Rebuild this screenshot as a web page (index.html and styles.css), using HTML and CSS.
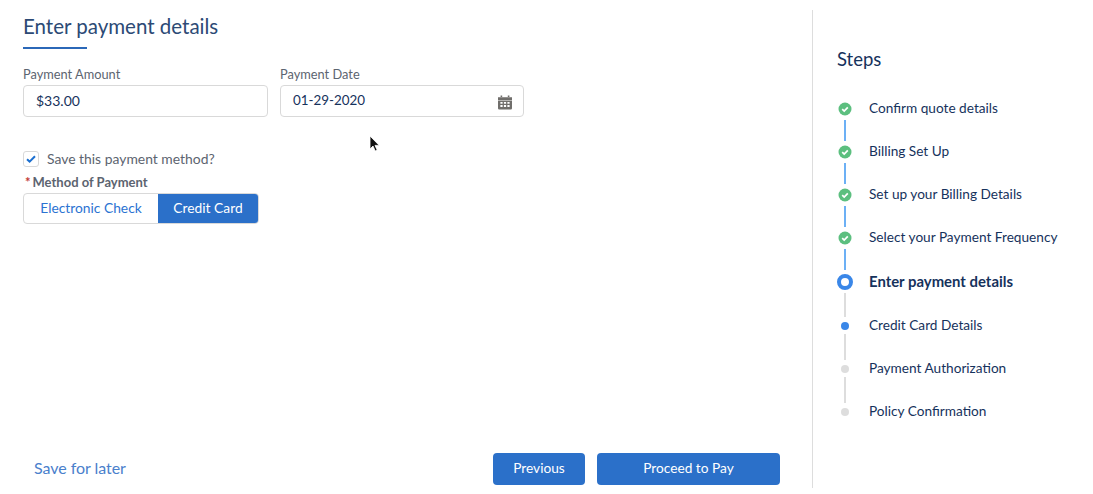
FILE: index.html
```html
<!DOCTYPE html>
<html lang="en-US">
<head>
<meta charset="utf-8">
<title>Enter payment details</title>
<link rel="stylesheet" href="styles.css">
</head>
<body>
<div class="page">
  <main class="main">
    <h1 class="title">Enter payment details</h1>
    <div class="title-rule"></div>

    <div class="fields">
      <div class="field">
        <label class="field-label">Payment Amount</label>
        <div class="input">$33.00</div>
      </div>
      <div class="field">
        <label class="field-label">Payment Date</label>
        <div class="input date">
          01-29-2020
          <svg class="cal" viewBox="0 0 14 14" width="14" height="15">
            <path fill="#706e6b" d="M2.6 0h1.6v1.6H2.6zM9.8 0h1.6v1.6H9.8zM0 1.8h14v2.6H0zM0 5h14v7.8a1.2 1.2 0 0 1-1.2 1.2H1.2A1.2 1.2 0 0 1 0 12.8z"/>
            <path fill="#fff" d="M2.4 6.4h2.2v1.8H2.4zM5.9 6.4h2.2v1.8H5.9zM9.4 6.4h2.2v1.8H9.4zM2.4 9.6h2.2v1.8H2.4zM5.9 9.6h2.2v1.8H5.9zM9.4 9.6h2.2v1.8H9.4z"/>
          </svg>
        </div>
      </div>
    </div>

    <div class="save-row">
      <span class="checkbox">
        <svg viewBox="0 0 10 8" width="10" height="8"><path d="M1 4.2l2.6 2.4L9 1.2" fill="none" stroke="#1b6fd0" stroke-width="2"/></svg>
      </span>
      <span class="save-text">Save this payment method?</span>
    </div>

    <div class="method-label"><span class="req">*</span>Method of Payment</div>
    <div class="toggle">
      <span class="toggle-item">Electronic Check</span>
      <span class="toggle-item on">Credit Card</span>
    </div>

    <div class="footer">
      <a class="later">Save for later</a>
      <div class="actions">
        <button class="btn prev">Previous</button>
        <button class="btn pay">Proceed to Pay</button>
      </div>
    </div>
  </main>

  <aside class="side">
    <h2 class="side-title">Steps</h2>
    <ul class="steps">
      <li class="step done"><span class="mark"><svg viewBox="0 0 14 14" width="14" height="14"><circle cx="7" cy="7" r="6.5" fill="#5cbf7f"/><path d="M4.2 7.2l2 1.9 3.6-3.8" fill="none" stroke="#fff" stroke-width="1.7"/></svg></span>Confirm quote details</li>
      <li class="step done"><span class="mark"><svg viewBox="0 0 14 14" width="14" height="14"><circle cx="7" cy="7" r="6.5" fill="#5cbf7f"/><path d="M4.2 7.2l2 1.9 3.6-3.8" fill="none" stroke="#fff" stroke-width="1.7"/></svg></span>Billing Set Up</li>
      <li class="step done"><span class="mark"><svg viewBox="0 0 14 14" width="14" height="14"><circle cx="7" cy="7" r="6.5" fill="#5cbf7f"/><path d="M4.2 7.2l2 1.9 3.6-3.8" fill="none" stroke="#fff" stroke-width="1.7"/></svg></span>Set up your Billing Details</li>
      <li class="step done last-done"><span class="mark"><svg viewBox="0 0 14 14" width="14" height="14"><circle cx="7" cy="7" r="6.5" fill="#5cbf7f"/><path d="M4.2 7.2l2 1.9 3.6-3.8" fill="none" stroke="#fff" stroke-width="1.7"/></svg></span>Select your Payment Frequency</li>
      <li class="step current"><span class="mark"><span class="ring"></span></span>Enter payment details</li>
      <li class="step next"><span class="mark"><span class="dot blue"></span></span>Credit Card Details</li>
      <li class="step todo"><span class="mark"><span class="dot"></span></span>Payment Authorization</li>
      <li class="step last"><span class="mark"><span class="dot"></span></span>Policy Confirmation</li>
    </ul>
  </aside>
</div>

<svg class="cursor" viewBox="0 0 12 18" width="12" height="18"><path d="M1 1v13l3-3 2.2 5 2-.9L6 10.4h4.2z" fill="#111" stroke="#fff" stroke-width=".8"/></svg>
</body>
</html>
```

FILE: styles.css
```css
html, body {
    margin: 0;
    height: 494px;
    overflow: hidden;
    background-color: #ffffff;
}
body {
    font-family: Lato, "Open Sans", Arial, sans-serif;
    font-size: 14px;
    color: #16325c;
    position: relative;
}
.page {
    display: flex;
    height: 494px;
}
.main {
    width: 812px;
    box-sizing: border-box;
    padding: 14px 32px 9px 23px;
    display: flex;
    flex-direction: column;
}
.title {
    margin: 0;
    font-size: 20.5px;
    line-height: 24px;
    font-weight: 400;
    color: #2c4a75;
}
.title-rule {
    width: 64px;
    height: 2px;
    margin-top: 9px;
    background-color: #2b68b8;
}
.fields {
    display: flex;
    gap: 12px;
    margin-top: 17px;
}
.field {
    width: 245px;
}
.field + .field {
    width: 244px;
}
.field-label {
    display: block;
    font-size: 12.8px;
    line-height: 17px;
    color: #5c6470;
    margin-bottom: 2px;
}
.input {
    height: 32px;
    box-sizing: border-box;
    padding: 0 12px 2px 12px;
    border: 1px solid #d9d9d9;
    border-radius: 4px;
    display: flex;
    align-items: center;
    justify-content: space-between;
    font-size: 14px;
    color: #16325c;
}
.input.date {
    font-size: 13.4px;
    padding-right: 11px;
}
.cal {
    margin-top: 4px;
}
.save-row {
    display: flex;
    align-items: center;
    gap: 8px;
    margin-top: 34px;
    height: 16px;
    font-size: 13.9px;
    color: #5c6470;
}
.save-text {
    margin-bottom: 2px;
}
.checkbox {
    width: 16px;
    height: 16px;
    box-sizing: border-box;
    border: 1px solid #d9d9d9;
    border-radius: 3px;
    display: flex;
    align-items: center;
    justify-content: center;
}
.method-label {
    margin-top: 7px;
    font-size: 13px;
    line-height: 17px;
    font-weight: 700;
    color: #5c6470;
}
.req {
    color: #c23934;
    margin: 0 2px 0 2px;
}
.toggle {
    display: flex;
    width: 236px;
    height: 31px;
    margin-top: 2px;
    box-sizing: border-box;
    border: 1px solid #d9d9d9;
    border-radius: 4px;
    overflow: hidden;
}
.toggle-item {
    display: flex;
    align-items: center;
    justify-content: center;
    width: 134px;
    padding-bottom: 2px;
    box-sizing: border-box;
    font-size: 13.8px;
    color: #2b73d2;
}
.toggle-item.on {
    width: 100px;
    background-color: #2b70c9;
    color: #ffffff;
}
.footer {
    margin-top: auto;
    display: flex;
    align-items: center;
    justify-content: space-between;
    padding-left: 11px;
}
.later {
    font-size: 16px;
    letter-spacing: -0.05px;
    color: #4a80cc;
    margin-bottom: 3px;
}
.actions {
    display: flex;
    gap: 12px;
}
.btn {
    height: 32px;
    border: 0;
    border-radius: 4px;
    background-color: #2b70c9;
    color: #ffffff;
    font-family: inherit;
    font-size: 13.7px;
    padding: 0 0 3px 0;
}
.prev {
    width: 92px;
}
.pay {
    width: 183px;
}
.side {
    margin-top: 10px;
    height: 478px;
    flex: 1;
    border-left: 1px solid #dddddd;
    padding-left: 24px;
}
.side-title {
    margin: 37px 0 0 0;
    font-size: 18.5px;
    line-height: 24px;
    font-weight: 400;
    color: #16325c;
}
.steps {
    list-style: none;
    margin: 28px 0 0 0;
    padding: 0;
}
.step {
    display: flex;
    align-items: center;
    height: 18px;
    margin-bottom: 25px;
    position: relative;
    font-size: 13.65px;
    color: #16325c;
}
.mark {
    width: 16px;
    height: 18px;
    margin: 2px 16px 0 0;
    display: flex;
    align-items: center;
    justify-content: center;
    flex: none;
}
.step::after {
    content: "";
    position: absolute;
    left: 7px;
    top: 21px;
    width: 2px;
    height: 21px;
    background-color: #6cb0f5;
}
.step.current::after {
    background-color: #dddddd;
    height: 24px;
}
.step.next::after, .step.todo::after {
    background-color: #dddddd;
    top: 18px;
    height: 26px;
}
.step.last::after {
    display: none;
}
.step.last-done {
    margin-bottom: 26px;
}
.step.current {
    font-size: 14.9px;
    font-weight: 700;
    margin-bottom: 26px;
}
.ring {
    width: 16px;
    height: 16px;
    box-sizing: border-box;
    border: 4px solid #3a87e8;
    border-radius: 50%;
}
.dot {
    width: 8px;
    height: 8px;
    border-radius: 50%;
    background-color: #dddddd;
}
.dot.blue {
    background-color: #3a87e8;
}
.cursor {
    position: absolute;
    left: 369px;
    top: 135px;
}
```
